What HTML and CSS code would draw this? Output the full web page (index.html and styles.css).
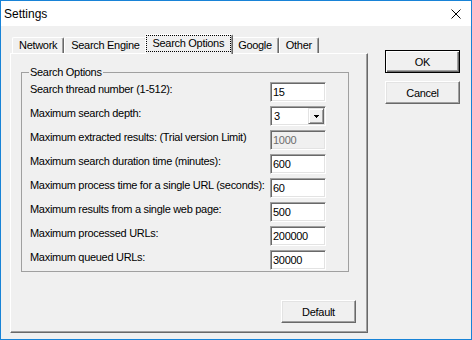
FILE: index.html
```html
<!DOCTYPE html>
<html lang="en">
<head>
    <meta charset="UTF-8">
    <title>Settings</title>
    <link rel="stylesheet" href="styles.css">
</head>
<body>

<div class="window">
    <div class="titlebar">
        <span class="title">Settings</span>
        <svg class="close" width="10" height="10" viewBox="0 0 10 10">
            <path d="M0.5 0.5L9.5 9.5M9.5 0.5L0.5 9.5" stroke="#000" stroke-width="1" fill="none"/>
        </svg>
    </div>

    <div class="dialog">
        <div class="tabs-area">
            <div class="tab-strip">
                <div class="tab">Network</div>
                <div class="tab">Search Engine</div>
                <div class="tab tab-active"><span class="focus">Search Options</span></div>
                <div class="tab">Google</div>
                <div class="tab">Other</div>
            </div>

            <div class="panel">
                <fieldset class="group">
                    <legend>Search Options</legend>
                    <div class="rows">
                        <div class="row">
                            <label for="threads">Search thread number (1-512):</label>
                            <input class="field" id="threads" type="text" value="15">
                        </div>
                        <div class="row">
                            <label>Maximum search depth:</label>
                            <div class="combo">
                                <span class="combo-value">3</span>
                                <span class="combo-btn">
                                    <svg width="5" height="3" viewBox="0 0 5 3"><path d="M0 0h5v1H0zM1 1h3v1H1zM2 2h1v1H2z" fill="#000"/></svg>
                                </span>
                            </div>
                        </div>
                        <div class="row">
                            <label for="extracted">Maximum extracted results: (Trial version Limit)</label>
                            <input class="field field-disabled" id="extracted" type="text" value="1000" readonly>
                        </div>
                        <div class="row">
                            <label for="duration">Maximum search duration time (minutes):</label>
                            <input class="field" id="duration" type="text" value="600">
                        </div>
                        <div class="row">
                            <label for="process">Maximum process time for a single URL (seconds):</label>
                            <input class="field" id="process" type="text" value="60">
                        </div>
                        <div class="row">
                            <label for="results">Maximum results from a single web page:</label>
                            <input class="field" id="results" type="text" value="500">
                        </div>
                        <div class="row">
                            <label for="processed">Maximum processed URLs:</label>
                            <input class="field" id="processed" type="text" value="200000">
                        </div>
                        <div class="row">
                            <label for="queued">Maximum queued URLs:</label>
                            <input class="field" id="queued" type="text" value="30000">
                        </div>
                    </div>
                </fieldset>

                <div class="panel-footer">
                    <button class="btn" type="button">Default</button>
                </div>
            </div>
        </div>

        <div class="side-buttons">
            <button class="btn btn-default" type="button">OK</button>
            <button class="btn" type="button">Cancel</button>
        </div>
    </div>
</div>

</body>
</html>
```

FILE: styles.css
```css
* {
    box-sizing: border-box;
}

body {
    margin: 0;
    background-color: #f0f0f0;
    color: #000;
    font-family: "Liberation Sans", Arial, sans-serif;
    font-size: 11px;
    letter-spacing: -0.3px;
}

/* window frame */
.window {
    width: 472px;
    height: 340px;
    border: 1px solid #1883d7;
    background-color: #f0f0f0;
}

.titlebar {
    height: 25px;
    background-color: #fff;
    display: flex;
    align-items: center;
    justify-content: space-between;
    padding: 0 10px 0 3px;
    font-size: 12px;
    letter-spacing: 0;
}

.close {
    display: block;
}

.dialog {
    display: flex;
    padding: 8px 0 0 9px;
}

/* tabs */
.tabs-area {
    width: 358px;
}

.tab-strip {
    display: flex;
    align-items: flex-end;
    height: 19px;
    padding-left: 2px;
}

.tab {
    height: 16px;
    padding: 0 6px;
    line-height: 14px;
    white-space: nowrap;
    border-top: 1px solid #fff;
    border-left: 1px solid #fff;
    border-right: 1px solid #696969;
    border-top-left-radius: 2px;
    border-top-right-radius: 2px;
    box-shadow: inset -1px 0 0 #a0a0a0;
}

.tab-active {
    position: relative;
    z-index: 1;
    height: 20px;
    margin: 0 -2px -1px -2px;
    padding: 0 1px 0 0;
    background-color: #f0f0f0;
}

.focus {
    display: block;
    height: 17px;
    padding: 0 6px;
    line-height: 14px;
    border: 1px dotted #000;
}

.panel {
    height: 280px;
    padding: 12px 11px 0 10px;
    border-top: 1px solid #fff;
    border-left: 1px solid #fff;
    border-right: 1px solid #696969;
    border-bottom: 1px solid #696969;
    box-shadow: inset -1px -1px 0 #a0a0a0;
}

/* group box */
.group {
    width: 328px;
    margin: 0;
    padding: 3px 22px 1px 8px;
    border: 1px solid #a0a0a0;
    min-inline-size: 0;
}

.group legend {
    padding: 0 1px;
    margin-left: -1px;
    line-height: 13px;
}

.rows {
    display: flex;
    flex-direction: column;
    gap: 4px;
}

.row {
    display: flex;
    justify-content: space-between;
    align-items: flex-start;
    height: 20px;
}

.row label {
    line-height: 13px;
    padding-top: 1px;
    white-space: nowrap;
}

.field,
.combo {
    width: 56px;
    height: 20px;
    border-top: 1px solid #a0a0a0;
    border-left: 1px solid #a0a0a0;
    border-right: 1px solid #fff;
    border-bottom: 1px solid #fff;
    box-shadow: inset 1px 1px 0 #696969, inset -1px -1px 0 #e3e3e3;
    background-color: #fff;
}

.field {
    margin: 0;
    padding: 0 2px;
    font: inherit;
    letter-spacing: inherit;
    color: #000;
    outline: none;
}

.field-disabled {
    background-color: #f0f0f0;
    color: #6d6d6d;
}

.combo {
    display: flex;
    padding: 1px;
}

.combo-value {
    flex: 1;
    padding-left: 2px;
    line-height: 16px;
}

.combo-btn {
    width: 16px;
    height: 16px;
    display: flex;
    align-items: center;
    justify-content: center;
    background-color: #f0f0f0;
    border-top: 1px solid #e3e3e3;
    border-left: 1px solid #e3e3e3;
    border-right: 1px solid #696969;
    border-bottom: 1px solid #696969;
    box-shadow: inset 1px 1px 0 #fff, inset -1px -1px 0 #a0a0a0;
}

.combo-btn svg {
    display: block;
}

/* buttons */
.panel-footer {
    display: flex;
    justify-content: flex-end;
    padding-top: 28px;
}

.btn {
    width: 75px;
    height: 23px;
    padding: 0;
    font: inherit;
    letter-spacing: inherit;
    color: #000;
    background-color: #f0f0f0;
    border-top: 1px solid #fff;
    border-left: 1px solid #fff;
    border-right: 1px solid #696969;
    border-bottom: 1px solid #696969;
    box-shadow: inset -1px -1px 0 #a0a0a0, inset 1px 1px 0 #e3e3e3;
}

.btn-default {
    border: 1px solid #000;
    box-shadow: inset 1px 1px 0 #fff, inset -1px -1px 0 #696969, inset -2px -2px 0 #a0a0a0;
}

.side-buttons {
    display: flex;
    flex-direction: column;
    gap: 8px;
    margin-left: 17px;
    padding-top: 16px;
}
```
